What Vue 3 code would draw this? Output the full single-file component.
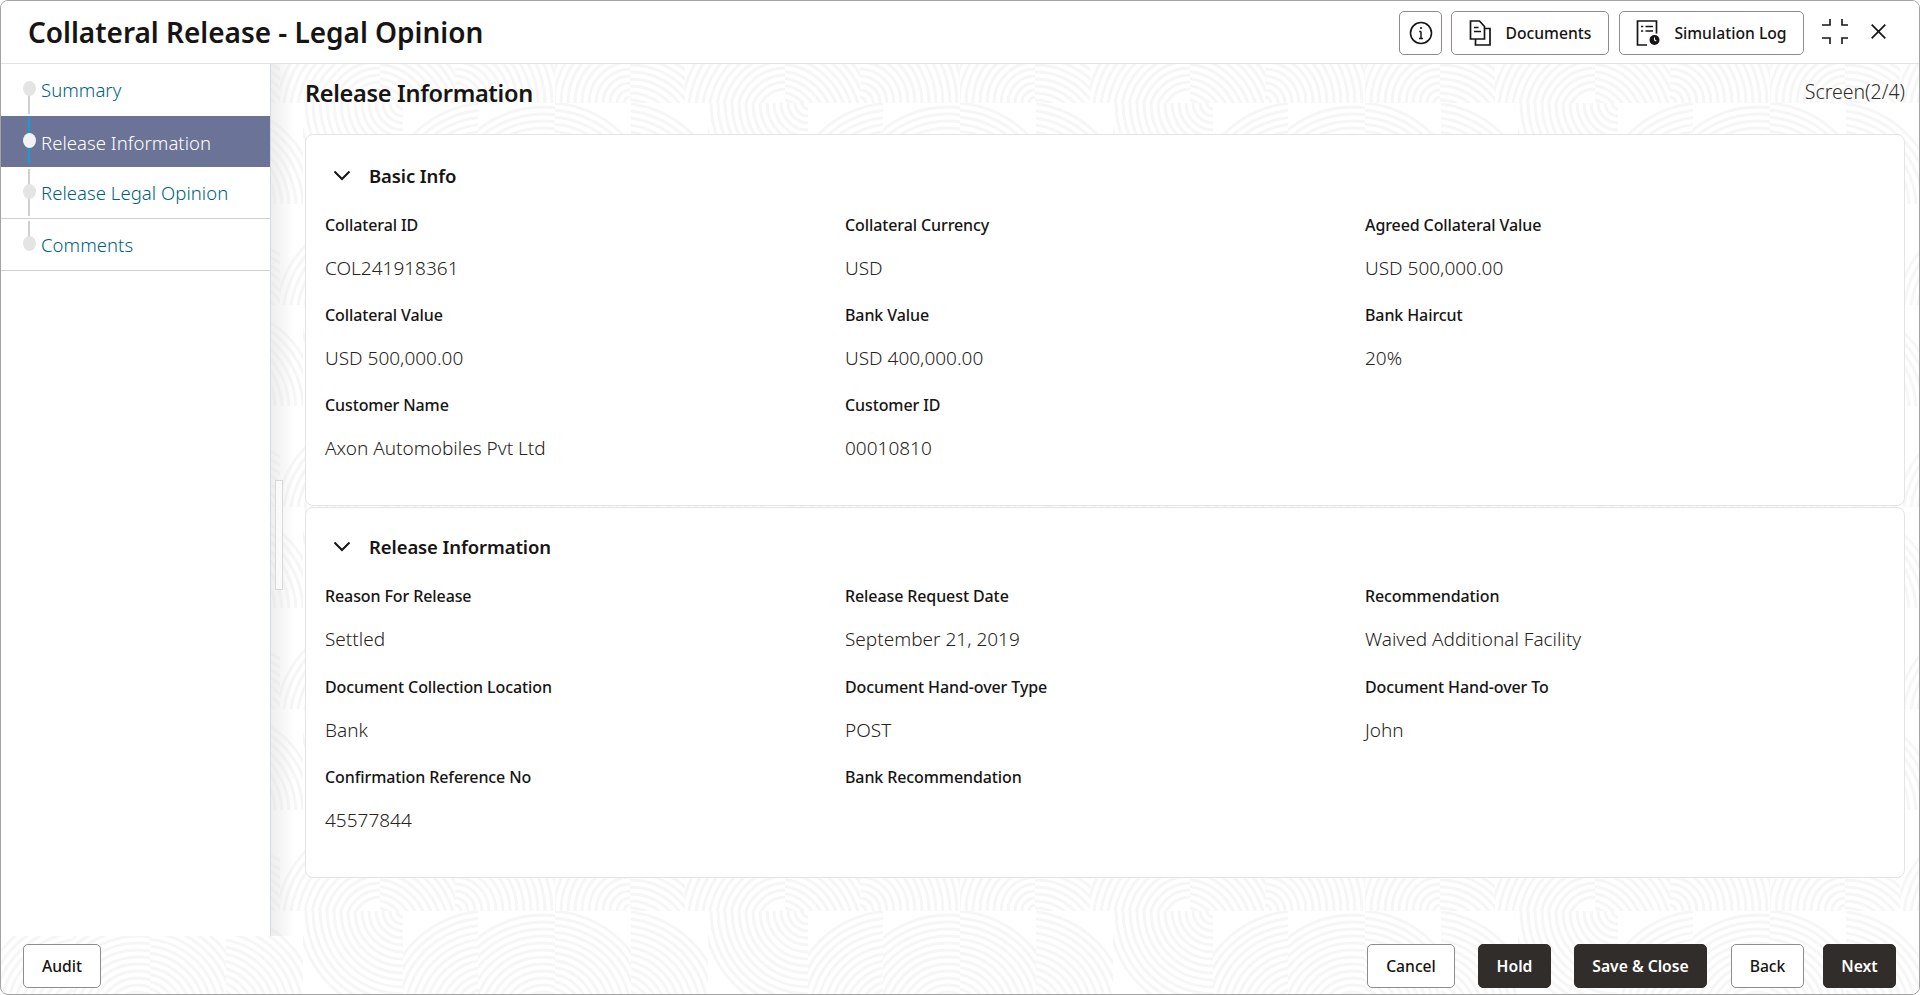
<script setup>
const navItems = [
  { label: 'Summary', state: 'first' },
  { label: 'Release Information', state: 'active' },
  { label: 'Release Legal Opinion', state: 'ruled' },
  { label: 'Comments', state: 'ruled' },
]

const sections = [
  {
    title: 'Basic Info',
    fields: [
      ['Collateral ID', 'COL241918361'],
      ['Collateral Currency', 'USD'],
      ['Agreed Collateral Value', 'USD 500,000.00'],
      ['Collateral Value', 'USD 500,000.00'],
      ['Bank Value', 'USD 400,000.00'],
      ['Bank Haircut', '20%'],
      ['Customer Name', 'Axon Automobiles Pvt Ltd'],
      ['Customer ID', '00010810'],
    ],
  },
  {
    title: 'Release Information',
    fields: [
      ['Reason For Release', 'Settled'],
      ['Release Request Date', 'September 21, 2019'],
      ['Recommendation', 'Waived Additional Facility'],
      ['Document Collection Location', 'Bank'],
      ['Document Hand-over Type', 'POST'],
      ['Document Hand-over To', 'John'],
      ['Confirmation Reference No', '45577844'],
      ['Bank Recommendation', ''],
    ],
  },
]

const T = 101
const cells = [
  { x: 0, y: 0, w: 100, h: T, cx: 100, cy: 0, min: 6 },
  { x: 100, y: 0, w: 75, h: T, cx: 185, cy: 104, min: 27 },
  { x: 175, y: 0, w: 77, h: T, cx: 240, cy: 108, min: 27 },
  { x: 252, y: 0, w: 76, h: T, cx: 245, cy: 104, min: 27 },
  { x: 328, y: 0, w: 77, h: T, cx: 315, cy: 104, min: 27 },
  { x: 0, y: T, w: 77, h: T, cx: 77, cy: 215, min: 27 },
  { x: 382, y: T, w: 23, h: T, cx: 482, cy: 215, min: 27 },
  { x: 77, y: T, w: 75, h: T, cx: 70, cy: 225, min: 27 },
  { x: 152, y: T, w: 100, h: T, cx: 152, cy: 202, min: 6 },
  { x: 252, y: T, w: 75, h: T, cx: 327, cy: 202, min: 6 },
  { x: 327, y: T, w: 55, h: T, cx: 327, cy: 240, min: 27 },
]
const radii = Array.from({ length: 15 }, (_, i) => 6 + i * 7)
const ringsOf = (c) => radii.filter((r) => r >= c.min)
</script>

<template>
  <div class="window">
    <svg class="texture" width="1920" height="995" aria-hidden="true">
      <defs>
        <pattern id="grain" width="405" height="202" patternUnits="userSpaceOnUse" patternTransform="translate(303 103)">
          <svg v-for="(c, i) in cells" :key="i" :x="c.x" :y="c.y" :width="c.w" :height="c.h">
            <circle
              v-for="r in ringsOf(c)"
              :key="r"
              :cx="c.cx - c.x"
              :cy="c.cy - c.y"
              :r="r"
              fill="none"
              stroke="#f6f6f6"
              stroke-width="3"
            />
          </svg>
        </pattern>
      </defs>
      <rect width="1920" height="995" fill="url(#grain)" />
    </svg>

    <header class="topbar">
      <h1 class="title">Collateral Release - Legal Opinion</h1>
      <div class="top-actions">
        <button class="btn icon-only" aria-label="Info">
          <svg width="24" height="24" viewBox="0 0 24 24" fill="none" stroke="#161513" stroke-width="1.6">
            <circle cx="12" cy="12" r="10.5" />
            <path d="M12 10.5v7M10 17.5h4M10.2 10.5H12" stroke-width="1.5" />
            <circle cx="12" cy="7" r="1.1" fill="#161513" stroke="none" />
          </svg>
        </button>
        <button class="btn top-btn docs">
          <svg width="22" height="26" viewBox="0 0 22 26" fill="none" stroke="#161513" stroke-width="1.7">
            <path d="M1.5 1h9l5 5.5V19H1.5z" />
            <path d="M15.5 8.5H21V25H6.5v-6" />
            <path d="M5 7.5h4.5M5 11.5h7" />
          </svg>
          <span>Documents</span>
        </button>
        <button class="btn top-btn sim">
          <svg width="24" height="26" viewBox="0 0 24 26" fill="none" stroke="#161513" stroke-width="1.7">
            <path d="M11 25H1.5V1h19v12.5" />
            <path d="M5 6.5h2.2M9.5 6.5H17M5 11h2.2M9.5 11H17" />
            <circle cx="18.5" cy="20" r="5" fill="#161513" stroke="none" />
            <path d="M18.5 17.5V20l1.8 1" stroke="#fff" stroke-width="1.1" />
          </svg>
          <span>Simulation Log</span>
        </button>
        <button class="plain compress" aria-label="Restore">
          <svg width="26" height="25" viewBox="0 0 26 25" fill="none" stroke="#161513" stroke-width="1.6">
            <path d="M8 0v6H0M20 0v6h6M8 25v-6H0M20 25v-6h6" />
          </svg>
        </button>
        <button class="plain close" aria-label="Close">
          <svg width="15" height="15" viewBox="0 0 15 15" fill="none" stroke="#161513" stroke-width="1.7">
            <path d="M.7.7l13.6 13.6M14.3.7L.7 14.3" />
          </svg>
        </button>
      </div>
    </header>

    <div class="body">
      <nav class="sidebar">
        <a
          v-for="item in navItems"
          :key="item.label"
          class="nav-item"
          :class="item.state"
        >
          <i class="rail"></i>
          <i class="dot"></i>
          <span>{{ item.label }}</span>
        </a>
      </nav>

      <main class="main">
        <i class="handle"></i>
        <div class="main-head">
          <h2 class="page-title">Release Information</h2>
          <span class="screen-no">Screen(2/4)</span>
        </div>
        <section v-for="s in sections" :key="s.title" class="card">
          <div class="card-head">
            <svg width="18" height="11" viewBox="0 0 18 11" fill="none" stroke="#161513" stroke-width="2">
              <path d="M1.5 1.5L9 9l7.5-7.5" />
            </svg>
            <h3>{{ s.title }}</h3>
          </div>
          <div class="grid">
            <div v-for="f in s.fields" :key="f[0]" class="field">
              <label>{{ f[0] }}</label>
              <p>{{ f[1] }}</p>
            </div>
          </div>
        </section>
      </main>
    </div>

    <footer class="footer">
      <button class="btn foot">Audit</button>
      <div class="foot-right">
        <button class="btn foot cancel">Cancel</button>
        <button class="btn foot dark hold">Hold</button>
        <button class="btn foot dark save">Save &amp; Close</button>
        <button class="btn foot back">Back</button>
        <button class="btn foot dark next">Next</button>
      </div>
    </footer>
  </div>
</template>

<style>
html, body { margin: 0; background: #fff; }
</style>

<style scoped>
* { box-sizing: border-box; }
.window {
  position: relative;
  width: 1920px;
  height: 995px;
  display: flex;
  flex-direction: column;
  background: #fff;
  border: 1px solid #a3a3a3;
  border-radius: 8px;
  overflow: hidden;
  font-family: "Noto Sans", "Open Sans", sans-serif;
  color: #161513;
}
.texture { position: absolute; left: -1px; top: -1px; }
.topbar {
  position: relative;
  flex: 0 0 63px;
  display: flex;
  align-items: center;
  justify-content: space-between;
  padding: 0 33px 1px 27px;
  background: #fff;
  border-bottom: 1px solid #e2e2e2;
}
.title { margin: 0; font-size: 28px; font-weight: 600; letter-spacing: -0.03px; }
.top-actions { display: flex; align-items: center; padding-top: 2px; }
.btn {
  font-family: inherit;
  background: #fff;
  border: 1px solid #8f8b87;
  border-radius: 5px;
  color: #161513;
  height: 44px;
  display: inline-flex;
  align-items: center;
  justify-content: center;
  padding: 0;
}
.icon-only { width: 43px; margin-right: 9px; }
.top-btn { font-size: 15.7px; font-weight: 500; height: 44px; }
.docs { width: 158px; gap: 15px; margin-right: 10px; }
.sim { width: 185px; gap: 14px; margin-right: 18px; }
.plain { background: none; border: 0; padding: 0; display: inline-flex; }
.compress { margin-right: 23px; margin-bottom: 2px; }
.close { margin-bottom: 2px; }
.body { position: relative; flex: 1; display: flex; min-height: 0; }
.sidebar {
  width: 270px;
  flex: none;
  background: #fff;
  border-right: 1px solid #d5dbe3;
  display: flex;
  flex-direction: column;
}
.nav-item {
  position: relative;
  height: 52px;
  display: flex;
  align-items: center;
  padding-left: 40px;
  padding-bottom: 1px;
  font-size: 18.5px;
  font-weight: 300;
  color: #005f83;
  letter-spacing: 0.05px;
}
.nav-item.ruled { border-bottom: 1px solid #d0d0d0; }
.nav-item.active { background: #6b7396; color: #fff; height: 51px; padding-bottom: 0; padding-top: 2px; }
.rail {
  position: absolute;
  left: 27px;
  top: 2px;
  bottom: 2px;
  width: 2px;
  background: #d0d0d0;
}
.first .rail { top: 24px; }
.nav-item:last-child .rail { bottom: 26px; }
.active .rail { background: #1a9ad6; top: 1px; bottom: 4px; }
.dot {
  position: absolute;
  left: 22px;
  top: 17px;
  width: 13px;
  height: 15px;
  border-radius: 50%;
  background: #e4e4e4;
}
.active .dot { background: #f2f2f2; top: 17px; }
.main {
  position: relative;
  flex: 1;
  min-width: 0;
  padding: 0 14px 0 34px;
  background: linear-gradient(90deg, rgba(225, 225, 225, 0.55), rgba(255, 255, 255, 0) 24px);
}
.handle {
  position: absolute;
  left: 4px;
  top: 416px;
  width: 8px;
  height: 110px;
  background: #fafafa;
  border: 1px solid #d8d8d8;
}
.main-head {
  height: 70px;
  display: flex;
  align-items: center;
  justify-content: space-between;
  padding-bottom: 13px;
}
.page-title { margin: 0; font-size: 23.5px; font-weight: 600; letter-spacing: -0.3px; }
.screen-no { font-size: 19.5px; font-weight: 300; color: #2f2c29; margin-bottom: 2px; }
.card {
  background: #fff;
  border: 1px solid #e4e4e4;
  border-radius: 8px;
  height: 372px;
  padding: 0 0 0 19px;
  margin-bottom: 1px;
}
.card + .card { height: 371px; }
.card-head {
  height: 67px;
  padding-top: 13px;
  display: flex;
  align-items: center;
  gap: 18px;
  padding-left: 8px;
}
.card + .card .card-head { height: 65px; padding-top: 12px; }
.card-head h3 { margin: 0; font-size: 18.5px; font-weight: 600; letter-spacing: -0.1px; }
.grid { display: grid; grid-template-columns: repeat(3, 520px); grid-auto-rows: 90px; }
.card + .card .grid { grid-auto-rows: 90.5px; }
.field label {
  display: block;
  padding-top: 13px;
  font-size: 16px;
  font-weight: 500;
  letter-spacing: -0.1px;
  line-height: 20px;
}
.field p {
  margin: 21px 0 0;
  font-size: 19px;
  font-weight: 300;
  line-height: 24px;
  color: #262320;
}
.footer {
  position: relative;
  flex: 0 0 58px;
  display: flex;
  justify-content: space-between;
  align-items: flex-start;
  padding: 8px 23px 0 22px;
}
.foot { font-size: 15.7px; font-weight: 500; height: 44px; width: 78px; }
.foot-right { display: flex; }
.dark { background: #312d2a; border-color: #312d2a; color: #fff; font-weight: 600; }
.cancel { width: 88px; margin-right: 23px; }
.hold { width: 73px; margin-right: 23px; }
.save { width: 133px; margin-right: 24px; }
.back { width: 73px; margin-right: 19px; }
.next { width: 73px; }
</style>
